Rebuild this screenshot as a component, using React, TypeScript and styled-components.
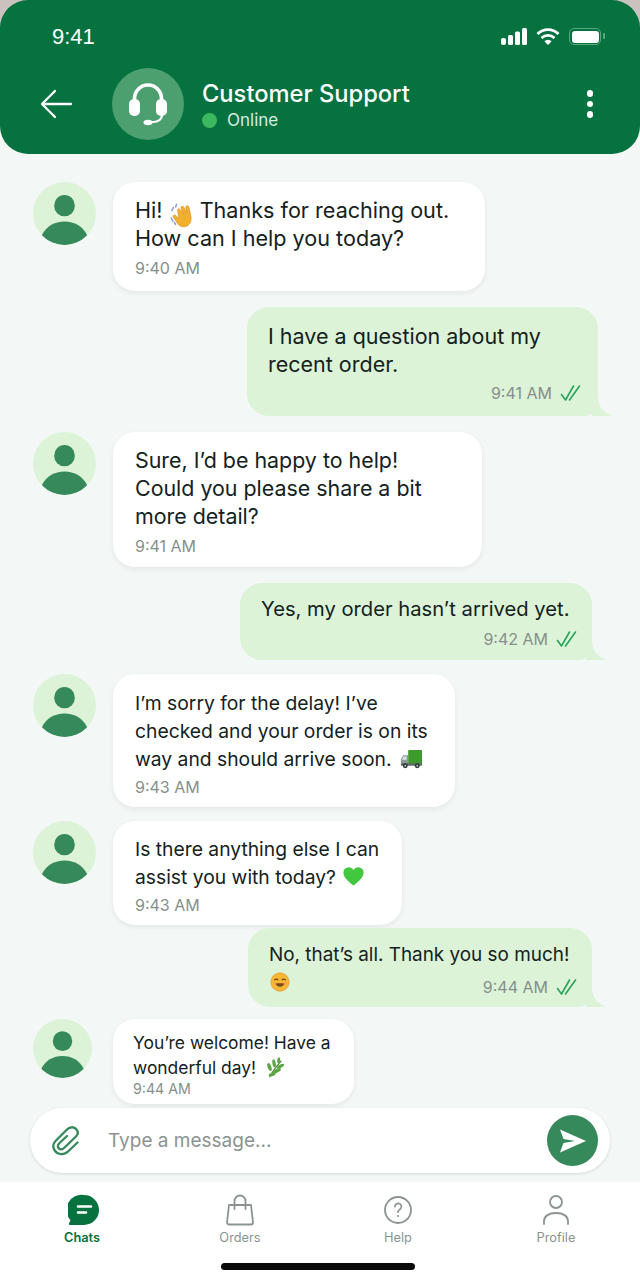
import styled, { createGlobalStyle } from "styled-components";
import { ReactNode } from "react";

const GREEN = "#06723f";
const MID = "#35895a";
const INK = "#14211d";

const GlobalStyle = createGlobalStyle`
  html, body {
    margin: 0;
    padding: 0;
    background: #f3f7f5;
    font-family: "Inter", "Noto Sans", sans-serif;
  }
`;

const WaveEmoji = () => (
  <WaveSvg viewBox="0 0 28 28" $size={30}>
    <path d="M6 6l-1.500 3M9 3l-1 2.500M4 16l1.500 3M7 20l1 2" stroke="#8f9bd8" strokeWidth="1.400" strokeLinecap="round" />
    <path d="M10 9.500c-1-1.500 1-3 2.200-1.600l3.200 4-2.200-5c-.8-1.700 1.500-2.800 2.500-1.100l2.600 5-.7-4.600c-.3-1.900 2.300-2.400 2.800-.5l1.700 7.300c.9 3.900.4 7-1.800 9.100-3 2.900-7.300 2.600-9.900-.5L6 15.300c-1.200-1.400.8-3.100 2.100-1.800l2.900 2.800z" fill="#f2b02f" stroke="#d98f1c" strokeWidth=".6" />
  </WaveSvg>
);

const TruckEmoji = () => (
  <TruckSvg viewBox="0 0 24 22" $size={23}>
    <rect x="8.500" y="1" width="14.500" height="15" rx="1" fill="#3f9a2e" />
    <path d="M1 10.500L3.500 6.500H8.500V16H1z" fill="#8a9a94" />
    <path d="M3.600 7.800H7v3.400H2z" fill="#d7e4e6" />
    <rect x="1" y="15" width="22" height="2.500" fill="#5d6a66" />
    <circle cx="5.500" cy="17.500" r="2.600" fill="#2f3836" />
    <circle cx="18" cy="17.500" r="2.600" fill="#2f3836" />
    <circle cx="5.500" cy="17.500" r="1" fill="#b8c2bf" />
    <circle cx="18" cy="17.500" r="1" fill="#b8c2bf" />
  </TruckSvg>
);

const HeartEmoji = () => (
  <HeartSvg viewBox="0 0 24 24" $size={23}>
    <path d="M12 21.500C5 16 1.500 12.300 1.500 8A5.600 5.600 0 0 1 12 5.300 5.600 5.600 0 0 1 22.500 8c0 4.300-3.500 8-10.500 13.500z" fill="#42c83f" />
  </HeartSvg>
);

const SmileEmoji = () => (
  <EmojiSvg viewBox="0 0 24 24" $size={20}>
    <circle cx="12" cy="12" r="11" fill="#f7b733" stroke="#e2962a" strokeWidth=".8" />
    <path d="M5.500 9.500q2-2 4 0M14.500 9.500q2-2 4 0" stroke="#6b4418" strokeWidth="1.400" fill="none" strokeLinecap="round" />
    <path d="M6.500 13.500c1 5.500 10 5.500 11 0z" fill="#7a4a1c" />
    <circle cx="6" cy="14" r="2" fill="#f39a5b" opacity=".6" />
    <circle cx="18" cy="14" r="2" fill="#f39a5b" opacity=".6" />
  </EmojiSvg>
);

const HerbEmoji = () => (
  <HerbSvg viewBox="0 0 24 24" $size={22}>
    <path d="M6 22C9 16 13 11 19 4" stroke="#4c8f37" strokeWidth="1.300" fill="none" />
    <g fill="#5da645">
      <ellipse cx="6" cy="11" rx="2" ry="4.500" transform="rotate(-20 6 11)" />
      <ellipse cx="11" cy="7" rx="1.800" ry="4.500" transform="rotate(-10 11 7)" />
      <ellipse cx="16" cy="3.800" rx="1.600" ry="3.500" transform="rotate(5 16 3.800)" />
      <ellipse cx="14" cy="15" rx="2" ry="4.800" transform="rotate(65 14 15)" />
      <ellipse cx="18" cy="10" rx="1.800" ry="4.300" transform="rotate(65 18 10)" />
      <ellipse cx="9" cy="19" rx="1.800" ry="4" transform="rotate(70 9 19)" />
    </g>
  </HerbSvg>
);

const DoubleCheck = () => (
  <svg width="22" height="18" viewBox="0 0 22 18" fill="none" stroke="#27a35a" strokeWidth="1.600" strokeLinecap="round" strokeLinejoin="round">
    <path d="M1.500 10.500L5.500 16 13.500 2" />
    <path d="M9.500 16L19.500 2" />
  </svg>
);

const AgentAvatar = ({ size }: { size: number }) => (
  <Avatar $size={size}>
    <svg width="100%" height="100%" viewBox="0 0 64 64">
      <ellipse cx="32" cy="24" rx="10.500" ry="10.800" fill={MID} />
      <path d="M9 54C13 45 22 40 32 40S51 45 55 54C50 60 41 64 32 64S14 60 9 54z" fill={MID} />
    </svg>
  </Avatar>
);

type BubbleProps = {
  width: number;
  top: number;
  pt: number;
  pb: number;
  fs: number;
  gap: number;
  time: string;
  children: ReactNode;
};

const Incoming = ({ width, top, pt, pb, fs, gap, time, children, small, avatar = 63, pad = 22 }: BubbleProps & { small?: boolean; avatar?: number; pad?: number }) => (
  <Row $top={top}>
    <AvatarSlot>
      <AgentAvatar size={avatar} />
    </AvatarSlot>
    <LeftBubble $width={width} $pt={pt} $pb={pb} $pad={pad}>
      <BubbleText $fs={fs} $lh={small ? 25 : 28}>{children}</BubbleText>
      <Time $small={small} $gap={gap}>{time}</Time>
    </LeftBubble>
  </Row>
);

const Outgoing = ({ width, top, pt, pb, fs, gap, time, children, right, lead, lh = 28, padRight = 16 }: BubbleProps & { right: number; lead?: ReactNode; lh?: number; padRight?: number }) => (
  <OutRow $top={top} $right={right}>
    <RightBubble $width={width} $pt={pt} $pb={pb} $padRight={padRight}>
      <BubbleText $fs={fs} $lh={lh}>{children}</BubbleText>
      <Meta $gap={gap}>
        <Lead>{lead}</Lead>
        <Time>{time}</Time>
        <DoubleCheck />
      </Meta>
      <Tail viewBox="0 0 20 18">
        <path d="M0 0H6C6.500 8 11 15 20 17.500 18 18 4 18 0 18z" fill="#dcf3d8" />
      </Tail>
    </RightBubble>
  </OutRow>
);

export default function App() {
  return (
    <Screen>
      <GlobalStyle />
      <HeaderShell>
        <Header>
          <StatusBar>
            <Clock>9:41</Clock>
            <StatusIcons>
              <svg width="26" height="17" viewBox="0 0 26 17" fill="#fff">
                <rect x="0" y="10" width="5" height="7" rx="2" />
                <rect x="7" y="7" width="5" height="10" rx="1.500" />
                <rect x="14" y="3.500" width="5" height="13.500" rx="1.500" />
                <rect x="21" y="0" width="5" height="17" rx="1.500" />
              </svg>
              <svg width="24" height="17" viewBox="0 0 24 17" fill="none" stroke="#fff" strokeWidth="2.800">
                <path d="M1.500 6a15 15 0 0 1 21 0" />
                <path d="M5.500 10a9.500 9.500 0 0 1 13 0" />
                <path d="M12 17l-3.700-3.700a5.200 5.200 0 0 1 7.400 0z" fill="#fff" stroke="none" />
              </svg>
              <Battery>
                <BatteryFill />
              </Battery>
            </StatusIcons>
          </StatusBar>
          <TitleBar>
            <BackButton>
              <svg width="34" height="30" viewBox="0 0 34 30" fill="none" stroke="#fff" strokeWidth="2.300" strokeLinecap="round" strokeLinejoin="round">
                <path d="M15 2L2 15l13 13M2.500 15H31" />
              </svg>
            </BackButton>
            <HeadsetCircle>
              <svg width="42" height="46" viewBox="0 0 42 46" fill="none">
                <path d="M7.500 21V17.500a13.500 13.500 0 0 1 27 0V21" stroke="#fff" strokeWidth="3.600" />
                <rect x="2" y="18" width="11" height="17" rx="5" fill="#fff" />
                <rect x="29" y="18" width="11" height="17" rx="5" fill="#fff" />
                <path d="M35 34c0 4-3.500 6.500-8 7H22" stroke="#fff" strokeWidth="2.200" strokeLinecap="round" />
                <ellipse cx="21" cy="41.500" rx="4.500" ry="2.800" fill="#fff" />
              </svg>
            </HeadsetCircle>
            <TitleBlock>
              <Title>Customer Support</Title>
              <StatusLine>
                <OnlineDot />
                <OnlineText>Online</OnlineText>
              </StatusLine>
            </TitleBlock>
            <Kebab>
              <i />
              <i />
              <i />
            </Kebab>
          </TitleBar>
        </Header>
      </HeaderShell>

      <Chat>
        <Incoming width={372} top={28} pt={14} pb={10} gap={3} fs={21.6} time="9:40 AM">
          Hi! <WaveEmoji /> Thanks for reaching out.
          <br />
          How can I help you today?
        </Incoming>
        <Outgoing width={351} top={16} pt={15} pb={10} gap={2} fs={21.5} right={42} time="9:41 AM">
          I have a question about my
          <br />
          recent order.
        </Outgoing>
        <Incoming width={369} top={16} pt={14} pb={8} gap={3} fs={21.4} time="9:41 AM">
          Sure, I’d be happy to help!
          <br />
          Could you please share a bit
          <br />
          more detail?
        </Incoming>
        <Outgoing width={352} top={16} pt={12} pb={8} gap={3} fs={20.2} right={48} padRight={14} time="9:42 AM">
          Yes, my order hasn’t arrived yet.
        </Outgoing>
        <Incoming width={342} top={14} pt={15} pb={7} gap={1} fs={19.3} time="9:43 AM">
          I’m sorry for the delay! I’ve
          <br />
          checked and your order is on its
          <br />
          way and should arrive soon. <TruckEmoji />
        </Incoming>
        <Incoming width={289} top={14} pt={14} pb={7} gap={1} fs={19.3} time="9:43 AM">
          Is there anything else I can
          <br />
          assist you with today? <HeartEmoji />
        </Incoming>
        <Outgoing width={344} top={3} pt={13} pb={7} gap={6} fs={18.9} lh={27} right={48} padRight={14} time="9:44 AM" lead={<SmileEmoji />}>
          No, that’s all. Thank you so much!
        </Outgoing>
        <Incoming width={241} top={12} pt={11} pb={6} gap={0} fs={17.4} small time="9:44 AM" avatar={59} pad={20}>
          You’re welcome! Have a
          <br />
          wonderful day! <HerbEmoji />
        </Incoming>
      </Chat>

      <Composer>
        <InputPill>
          <ClipIcon width="30" height="32" viewBox="0 0 30 32" fill="none" stroke={MID} strokeWidth="2.300" strokeLinecap="round" strokeLinejoin="round">
            <path d="M25.500 17.500L15.500 27C11 30.500 5.500 29.500 3 26 .5 22.500 1 18.500 4 15.500L15 4.500C18 1.500 22.500 1.500 24.500 4.500 26.500 7 26 9.500 24 11.500L12 23C10 25 7.500 24.500 6.500 23 5.500 21.500 6 19.500 7.500 18L15 11" />
          </ClipIcon>
          <Placeholder>Type a message...</Placeholder>
          <SendButton>
            <svg width="28" height="26" viewBox="0 0 28 26" fill="#fff">
              <path d="M1 1.500L27 13 1 24.500l3.500-9.500L16 13 4.500 11z" />
            </svg>
          </SendButton>
        </InputPill>
      </Composer>

      <TabBar>
        <Tab>
          <ChatIcon width="32" height="32" viewBox="0 0 32 32">
            <path d="M16 1a15 15 0 0 1 0 30H2c-1 0-1.400-.8-1-1.500l1.500-3.500A15 15 0 0 1 16 1z" fill={GREEN} />
            <path d="M10 12.500h13M10 18.500h8" stroke="#fff" strokeWidth="2.600" strokeLinecap="round" />
          </ChatIcon>
          <TabLabel $active>Chats</TabLabel>
        </Tab>
        <Tab>
          <svg width="30" height="32" viewBox="0 0 30 32" fill="none" stroke="#8b9390" strokeWidth="1.800" strokeLinejoin="round" strokeLinecap="round">
            <path d="M4 11h22l2 17.500a2 2 0 0 1-2 2H4a2 2 0 0 1-2-2z" />
            <path d="M9.500 15V7a5.500 5.500 0 0 1 11 0v8" />
          </svg>
          <TabLabel>Orders</TabLabel>
        </Tab>
        <Tab>
          <svg width="30" height="32" viewBox="0 0 30 32" fill="none" stroke="#8b9390" strokeWidth="1.800" strokeLinecap="round">
            <circle cx="15" cy="16" r="13" />
            <path d="M12 12.500a3.200 3.200 0 1 1 5 2.700c-1.200.9-2 1.400-2 3" />
            <circle cx="15" cy="22" r="1.100" fill="#8b9390" stroke="none" />
          </svg>
          <TabLabel>Help</TabLabel>
        </Tab>
        <Tab>
          <svg width="30" height="32" viewBox="0 0 30 32" fill="none" stroke="#8b9390" strokeWidth="1.800" strokeLinecap="round">
            <circle cx="15" cy="8" r="6" />
            <path d="M3 30v-3c0-5 5-8 12-8s12 3 12 8v3" />
          </svg>
          <TabLabel>Profile</TabLabel>
        </Tab>
        <HomeBar />
      </TabBar>
    </Screen>
  );
}

const Screen = styled.div`
  width: 640px;
  height: 1280px;
  display: flex;
  flex-direction: column;
  overflow: hidden;
  position: relative;
  background: #f3f7f5;
  color: ${INK};
`;

const HeaderShell = styled.div`
  flex: none;
  background: linear-gradient(#c9c2bd 0 28px, #f3f7f5 28px);
`;

const Header = styled.header`
  height: 154px;
  box-sizing: border-box;
  background: ${GREEN};
  border-radius: 28px;
  color: #fff;
  display: flex;
  flex-direction: column;
`;

const StatusBar = styled.div`
  height: 68px;
  padding: 5px 39px 0 52px;
  box-sizing: border-box;
  display: flex;
  align-items: center;
  justify-content: space-between;
`;

const Clock = styled.span`
  font-size: 22px;
  font-family: "Liberation Sans", sans-serif;
`;

const StatusIcons = styled.div`
  display: flex;
  align-items: center;
  gap: 9px;
`;

const Battery = styled.div`
  width: 32px;
  height: 17px;
  box-sizing: border-box;
  border: 1.500px solid #5aa783;
  border-radius: 5px;
  padding: 1.500px;
  position: relative;

  &::after {
    content: "";
    position: absolute;
    right: -5px;
    top: 4px;
    width: 2px;
    height: 6px;
    border-radius: 1px;
    background: #5aa783;
  }
`;

const BatteryFill = styled.div`
  height: 100%;
  background: #fff;
  border-radius: 3px;
`;

const TitleBar = styled.div`
  display: flex;
  align-items: center;
  padding: 0 47px 0 40px;
`;

const BackButton = styled.div`
  width: 72px;
  display: flex;
`;

const HeadsetCircle = styled.div`
  width: 72px;
  height: 72px;
  border-radius: 50%;
  background: #4c9f6f;
  display: flex;
  align-items: center;
  justify-content: center;
  margin-right: 18px;
`;

const TitleBlock = styled.div`
  flex: 1;
  display: flex;
  flex-direction: column;
  gap: 1px;
  padding-top: 1px;
`;

const Title = styled.div`
  font-size: 23.700px;
  font-weight: 500;
  line-height: 30px;
`;

const StatusLine = styled.div`
  display: flex;
  align-items: center;
  gap: 10px;
`;

const OnlineDot = styled.span`
  width: 15px;
  height: 15px;
  border-radius: 50%;
  background: #3cb85e;
`;

const OnlineText = styled.span`
  font-size: 17px;
  color: #d7ece0;
`;

const Kebab = styled.div`
  display: flex;
  flex-direction: column;
  gap: 4px;

  i {
    display: block;
    width: 6.500px;
    height: 6.500px;
    border-radius: 50%;
    background: #fff;
  }
`;

const Chat = styled.main`
  height: 954px;
  flex: none;
  overflow: hidden;
  display: flex;
  flex-direction: column;
`;

const Row = styled.div<{ $top: number }>`
  display: flex;
  flex: none;
  align-items: flex-start;
  margin-top: ${(p) => p.$top}px;
  padding-left: 33px;
`;

const AvatarSlot = styled.div`
  width: 80px;
  flex: none;
`;

const Avatar = styled.div<{ $size: number }>`
  width: ${(p) => p.$size}px;
  height: ${(p) => p.$size}px;
  border-radius: 50%;
  overflow: hidden;
  background: #dcf3d8;
`;

const LeftBubble = styled.div<{ $width: number; $pt: number; $pb: number; $pad: number }>`
  width: ${(p) => p.$width}px;
  box-sizing: border-box;
  padding: ${(p) => p.$pt}px 16px ${(p) => p.$pb}px ${(p) => p.$pad}px;
  background: #fff;
  border-radius: 22px;
  box-shadow: 0 2px 5px rgba(30, 60, 45, 0.08);
`;

const OutRow = styled.div<{ $top: number; $right: number }>`
  display: flex;
  flex: none;
  justify-content: flex-end;
  margin-top: ${(p) => p.$top}px;
  padding-right: ${(p) => p.$right}px;
`;

const RightBubble = styled.div<{ $width: number; $pt: number; $pb: number; $padRight: number }>`
  width: ${(p) => p.$width}px;
  box-sizing: border-box;
  position: relative;
  padding: ${(p) => p.$pt}px ${(p) => p.$padRight}px ${(p) => p.$pb}px 21px;
  background: #dcf3d8;
  border-radius: 22px 22px 14px 22px;
`;

const Tail = styled.svg`
  position: absolute;
  right: -14px;
  bottom: 0;
  width: 20px;
  height: 18px;
`;

const BubbleText = styled.div<{ $fs: number; $lh: number }>`
  font-size: ${(p) => p.$fs}px;
  line-height: ${(p) => p.$lh}px;
  color: ${INK};
  white-space: nowrap;
`;

const EmojiSvg = styled.svg<{ $size: number }>`
  width: ${(p) => p.$size}px;
  height: ${(p) => p.$size}px;
  vertical-align: -5px;
  margin: 0 1px;
`;

const WaveSvg = styled(EmojiSvg)`
  vertical-align: -5px;
  margin: -8px -3px -8px -2px;
`;

const TruckSvg = styled(EmojiSvg)`
  margin-left: 3px;
`;

const HeartSvg = styled(EmojiSvg)`
  vertical-align: -4px;
`;

const HerbSvg = styled(EmojiSvg)`
  margin-left: 3px;
`;

const Meta = styled.div<{ $gap: number }>`
  display: flex;
  align-items: center;
  gap: 8px;
  margin-top: ${(p) => p.$gap}px;
`;

const Lead = styled.div`
  flex: 1;
  align-self: flex-start;
  margin-top: -3px;
`;

const Time = styled.div<{ $small?: boolean; $gap?: number }>`
  font-size: ${(p) => (p.$small ? 14.200 : 16)}px;
  line-height: ${(p) => (p.$small ? 18 : 26)}px;
  margin-top: ${(p) => p.$gap ?? 0}px;
  color: #868f8b;
`;

const Composer = styled.div`
  position: absolute;
  left: 30px;
  right: 30px;
  top: 1108px;
`;

const InputPill = styled.div`
  height: 65px;
  box-sizing: border-box;
  display: flex;
  align-items: center;
  padding: 0 12px 0 22px;
  background: #fff;
  border-radius: 33px;
  box-shadow: 0 1px 3px rgba(30, 60, 45, 0.14);
`;

const ClipIcon = styled.svg`
  flex: none;
`;

const Placeholder = styled.span`
  flex: 1;
  margin-left: 26px;
  font-size: 19px;
  color: #8b9390;
`;

const SendButton = styled.div`
  width: 51px;
  height: 51px;
  border-radius: 50%;
  background: ${MID};
  display: flex;
  align-items: center;
  justify-content: center;
`;

const TabBar = styled.nav`
  position: absolute;
  left: 0;
  right: 0;
  top: 1182px;
  height: 98px;
  background: #fff;
  display: grid;
  grid-template-columns: repeat(4, 158px);
  padding: 12px 3px 0;
  box-sizing: border-box;
  align-items: start;
`;

const Tab = styled.div`
  display: flex;
  flex-direction: column;
  align-items: center;
  gap: 2px;
`;

const ChatIcon = styled.svg`
  margin-left: 3px;
`;

const TabLabel = styled.span<{ $active?: boolean }>`
  font-size: 12.800px;
  line-height: 20px;
  font-weight: ${(p) => (p.$active ? 600 : 400)};
  color: ${(p) => (p.$active ? GREEN : "#8b9390")};
`;

const HomeBar = styled.div`
  position: absolute;
  left: 221px;
  top: 81px;
  width: 194px;
  height: 7px;
  border-radius: 4px;
  background: #0a0a0a;
`;
